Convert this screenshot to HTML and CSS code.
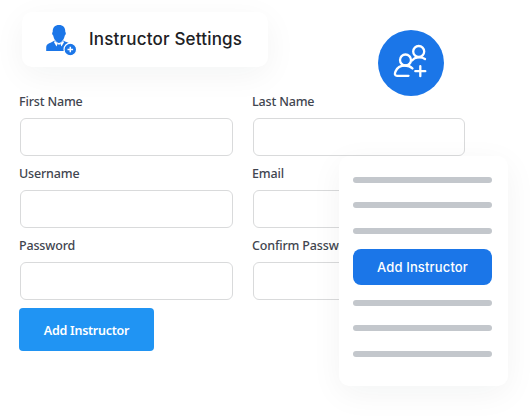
FILE: index.html
```
<!DOCTYPE html>
<html lang="en">
<head>
	<meta charset="utf-8">

	<title>Instructor Settings</title>

	<link rel="stylesheet" href="styles.css">
</head>

<body>
	<div class="title-card">
		<svg class="title-icon" width="32" height="32" viewBox="0 0 32 32">
			<path fill="#1b76e8" d="M13 1C17 1 19.500 3.600 19.300 8C20.300 8.500 19.900 11 18.800 11.500C18.200 15 15.500 19 13 19S7.800 15 7.200 11.500C6.100 11 5.700 8.500 6.700 8C6.500 3.600 9 1 13 1z"/>
			<path fill="#1b76e8" d="M8.500 16.500L13 21L17.500 16.500C19 18 22 18.300 24 19.500C20.500 20 18 22.800 18.500 27H0.200V23.500C0.200 19 5.500 19 8.500 16.500z"/>
			<path fill="#fff" d="M8.800 17L11.800 19.500L10.500 22.500L8 18.200zM17.200 17L14.200 19.500L15.500 22.500L18 18.200z"/>
			<circle cx="24.300" cy="25.500" r="6.300" fill="#1b76e8" stroke="#fff" stroke-width="1.200"/>
			<path stroke="#fff" stroke-width="1.500" d="M21.500 25.500h5.600M24.300 22.700v5.600"/>
		</svg>
		<h1>Instructor Settings</h1>
	</div>

	<form class="form">
		<div class="field">
			<label for="firstName">First Name</label>
			<input type="text" id="firstName">
		</div>
		<div class="field">
			<label for="lastName">Last Name</label>
			<input type="text" id="lastName">
		</div>
		<div class="field">
			<label for="username">Username</label>
			<input type="text" id="username">
		</div>
		<div class="field">
			<label for="email">Email</label>
			<input type="text" id="email">
		</div>
		<div class="field">
			<label for="password">Password</label>
			<input type="password" id="password">
		</div>
		<div class="field">
			<label for="confirm">Confirm Password</label>
			<input type="password" id="confirm">
		</div>
		<button type="button" class="submit">Add Instructor</button>
	</form>

	<div class="round-badge">
		<svg width="66" height="66" viewBox="0 0 66 66" fill="none" stroke="#fff" stroke-width="2.300" stroke-linecap="round">
			<circle cx="27.500" cy="30" r="5.500"/>
			<path d="M30.500 45.800H19C16.500 45.800 16.500 44 17.500 41.500C19.200 37.300 22.500 35.500 27 35.500C30 35.500 32.500 36.300 34.500 38.500"/>
			<circle cx="40.700" cy="21.500" r="5.500"/>
			<path d="M34 30.500C37 27 43 26.300 47 29M37.300 41.200H47.300M42.300 36.200V46.200"/>
		</svg>
	</div>

	<div class="side-card">
		<div class="lines">
			<span></span>
			<span></span>
			<span></span>
		</div>
		<button type="button" class="side-button">Add Instructor</button>
		<div class="lines">
			<span></span>
			<span></span>
			<span></span>
		</div>
	</div>
</body>
</html>
```

FILE: styles.css
```
* {
	box-sizing: border-box;
}
body {
	margin: 0;
	padding: 12px 0 0 19px;
	height: 418px;
	position: relative;
	overflow: hidden;
	background: #fff;
	font-family: "Noto Sans", sans-serif;
}
.title-card {
	display: flex;
	align-items: center;
	width: 246px;
	height: 55px;
	margin-left: 3px;
	padding: 0 0 2px 24px;
	border-radius: 10px;
	background: #fff;
	box-shadow: 0 8px 32px rgba(20,30,35,0.05);
}
.title-icon {
	flex: none;
	margin-top: 3px;
}
h1 {
	margin: 0 0 0 11px;
	font-family: Inter, sans-serif;
	font-size: 17px;
	font-weight: 500;
	line-height: 24px;
	letter-spacing: 0.18px;
	white-space: nowrap;
	color: #202124;
}
.form {
	display: grid;
	grid-template-columns: 214px 213px;
	column-gap: 19px;
	margin-top: 25px;
}
.field {
	height: 72px;
}
label {
	display: block;
	height: 26px;
	font-size: 12.5px;
	font-weight: 500;
	line-height: 19px;
	letter-spacing: -0.16px;
	white-space: nowrap;
	color: #41454f;
}
.field input {
	display: block;
	width: calc(100% - 1px);
	height: 38px;
	margin-left: 1px;
	border: 1px solid #d9dadb;
	border-radius: 6px;
	background: transparent;
}
button {
	padding: 0;
	border: 0;
	color: #fff;
}
.submit {
	width: 135px;
	height: 43px;
	padding-top: 2px;
	border-radius: 4px;
	background: #2094f3;
	font-family: "Noto Sans", sans-serif;
	font-size: 12.5px;
	font-weight: 600;
	letter-spacing: -0.25px;
}
.round-badge {
	position: absolute;
	left: 378px;
	top: 30px;
	width: 66px;
	height: 66px;
	border-radius: 50%;
	background: #1b76e8;
}
.side-card {
	position: absolute;
	left: 339px;
	top: 156px;
	width: 169px;
	height: 230px;
	padding: 21px 16px 0 14px;
	border-radius: 10px;
	background: #fff;
	box-shadow: 0 8px 32px rgba(20,30,35,0.05);
}
.lines {
	display: grid;
	grid-template-rows: 25px 26px 6px;
}
.lines span {
	height: 6px;
	border-radius: 3px;
	background: #c3c7cc;
}
.side-button {
	display: block;
	width: 139px;
	height: 36px;
	margin: 15px 0;
	border-radius: 8px;
	background: #1b76e8;
	font-family: Inter, sans-serif;
	font-size: 13px;
	font-weight: 500;
	letter-spacing: 0.15px;
}
```
